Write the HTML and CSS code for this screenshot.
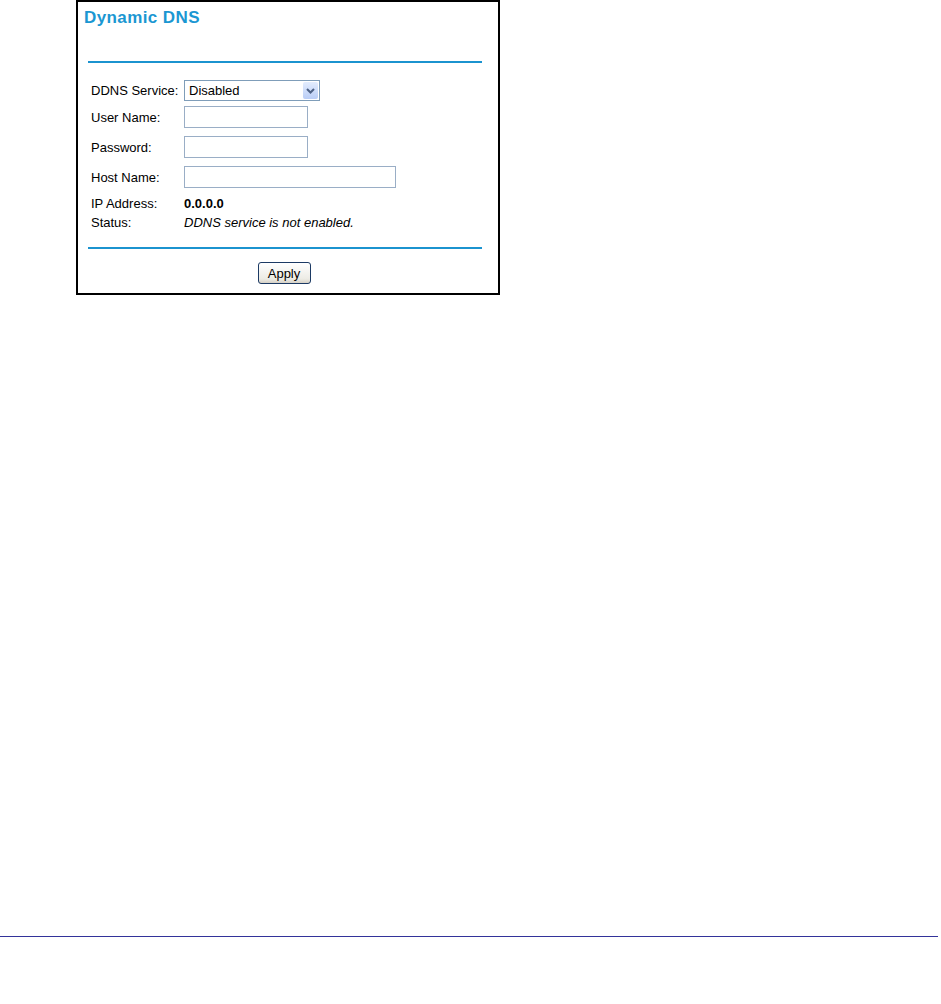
FILE: index.html
```html
<!DOCTYPE html>
<html>
<head>
<meta charset="utf-8">
<link rel="stylesheet" href="styles.css">
</head>
<body>
<div class="panel">
  <h1 class="title">Dynamic DNS</h1>
  <div class="rule rule-top"></div>
  <div class="form">
    <div class="row row-select">
      <span class="label">DDNS Service:</span>
      <span class="select-wrap">
        <select class="select"><option>Disabled</option></select>
        <span class="arrow"><svg width="15" height="17" viewBox="0 0 15 17"><path d="M4 7 L7.5 10.5 L11 7" fill="none" stroke="#4d6185" stroke-width="2"/></svg></span>
      </span>
    </div>
    <div class="row row-user">
      <span class="label">User Name:</span>
      <input class="input input-short" type="text">
    </div>
    <div class="row row-pass">
      <span class="label">Password:</span>
      <input class="input input-short" type="password">
    </div>
    <div class="row row-host">
      <span class="label">Host Name:</span>
      <input class="input input-long" type="text">
    </div>
    <div class="row row-ip">
      <span class="label">IP Address:</span>
      <span class="value bold">0.0.0.0</span>
    </div>
    <div class="row row-status">
      <span class="label">Status:</span>
      <span class="value italic">DDNS service is not enabled.</span>
    </div>
  </div>
  <div class="rule rule-bottom"></div>
  <div class="actions">
    <button class="btn" type="button">Apply</button>
  </div>
</div>
<div class="footer-line"></div>
</body>
</html>
```
FILE: styles.css
```css
html, body {
  margin: 0;
  padding: 0;
  background: #fff;
}
body {
  font-family: "Liberation Sans", Arial, sans-serif;
  font-size: 13px;
  color: #000;
}
.panel {
  margin-left: 76px;
  width: 420px;
  height: 291px;
  border: 2px solid #000;
  position: relative;
}
.title {
  margin: 0;
  padding: 6px 0 0 6px;
  font-size: 17px;
  line-height: 20px;
  font-weight: bold;
  letter-spacing: 0.4px;
  color: #1b97d2;
}
.rule {
  height: 2px;
  background: #1b93cf;
  margin-left: 10px;
  margin-right: 16px;
}
.rule-top {
  margin-top: 33px;
}
.form {
  padding-left: 13px;
  padding-top: 16px;
}
.row {
  display: flex;
  align-items: center;
}
.label {
  width: 93px;
  flex: none;
}
.row-select { height: 22px; }
.row-user { height: 22px; margin-top: 5px; }
.row-pass { height: 22px; margin-top: 8px; }
.row-host { height: 22px; margin-top: 8px; }
.row-ip { height: 16px; margin-top: 7px; }
.row-status { height: 16px; margin-top: 3px; }
.bold { font-weight: bold; }
.italic { font-style: italic; }
.select-wrap {
  position: relative;
  display: inline-block;
  width: 136px;
  height: 21px;
}
.select {
  -webkit-appearance: none;
  appearance: none;
  width: 136px;
  height: 21px;
  margin: 0;
  padding: 0 0 0 4px;
  border: 1px solid #7f9db9;
  border-radius: 0;
  background: #fff;
  font-family: "Liberation Sans", Arial, sans-serif;
  font-size: 13px;
  color: #000;
}
.arrow {
  position: absolute;
  right: 2px;
  top: 2px;
  width: 15px;
  height: 17px;
  background: linear-gradient(#e3ecfd, #b9cdf6);
  border-radius: 2px;
  pointer-events: none;
}
.arrow svg { display: block; }
.input {
  box-sizing: border-box;
  height: 22px;
  margin: 0;
  padding: 0 3px;
  border: 1px solid #9aaec6;
  background: #fff;
  font-family: "Liberation Sans", Arial, sans-serif;
  font-size: 13px;
}
.input-short { width: 124px; }
.input-long { width: 212px; }
.rule-bottom {
  margin-top: 17px;
}
.actions {
  display: flex;
  justify-content: center;
  margin-top: 13px;
  padding-right: 8px;
}
.btn {
  width: 53px;
  height: 22px;
  padding: 0;
  border: 1px solid #1c3a64;
  border-radius: 3px;
  background: linear-gradient(#ffffff, #ecebe4 80%, #d6d0c5);
  font-family: "Liberation Sans", Arial, sans-serif;
  font-size: 13px;
  color: #000;
}
.footer-line {
  margin-top: 641px;
  width: 938px;
  height: 1px;
  background: #33339a;
}
```
